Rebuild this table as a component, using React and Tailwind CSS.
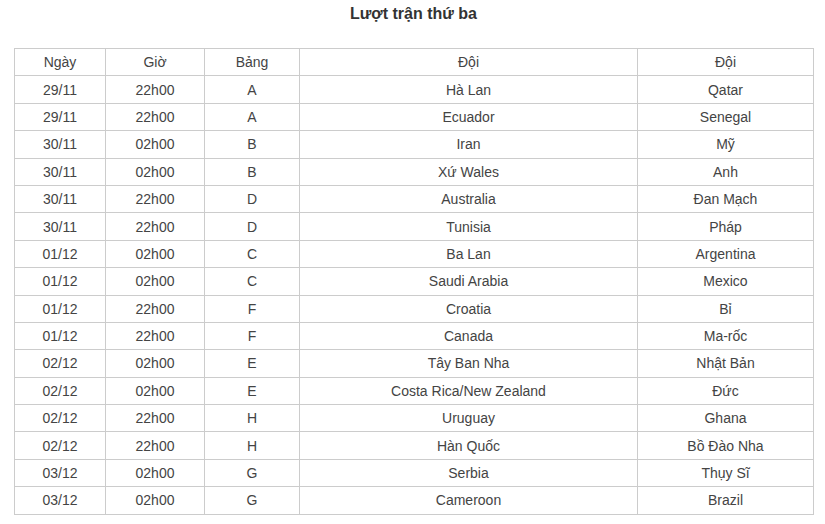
import React from 'react';

const rows = [
    ['29/11', '22h00', 'A', 'Hà Lan', 'Qatar'],
    ['29/11', '22h00', 'A', 'Ecuador', 'Senegal'],
    ['30/11', '02h00', 'B', 'Iran', 'Mỹ'],
    ['30/11', '02h00', 'B', 'Xứ Wales', 'Anh'],
    ['30/11', '22h00', 'D', 'Australia', 'Đan Mạch'],
    ['30/11', '22h00', 'D', 'Tunisia', 'Pháp'],
    ['01/12', '02h00', 'C', 'Ba Lan', 'Argentina'],
    ['01/12', '02h00', 'C', 'Saudi Arabia', 'Mexico'],
    ['01/12', '22h00', 'F', 'Croatia', 'Bỉ'],
    ['01/12', '22h00', 'F', 'Canada', 'Ma-rốc'],
    ['02/12', '02h00', 'E', 'Tây Ban Nha', 'Nhật Bản'],
    ['02/12', '02h00', 'E', 'Costa Rica/New Zealand', 'Đức'],
    ['02/12', '22h00', 'H', 'Uruguay', 'Ghana'],
    ['02/12', '22h00', 'H', 'Hàn Quốc', 'Bồ Đào Nha'],
    ['03/12', '02h00', 'G', 'Serbia', 'Thụy Sĩ'],
    ['03/12', '02h00', 'G', 'Cameroon', 'Brazil'],
];

const headers = ['Ngày', 'Giờ', 'Bảng', 'Đội', 'Đội'];

export default function App() {
    return (
        <div className="bg-white w-[825px] h-[524px] overflow-hidden text-[#333] font-['Liberation_Sans',Arial,sans-serif]">
            <div className="pl-[14px] w-[813px]">
                <h2 className="text-center font-bold text-[16px] leading-[20px] pt-[4px] h-[48px]">Lượt trận thứ ba</h2>
                <table className="w-[799px] table-fixed border-collapse text-[14px] text-center text-[#444]">
                    <colgroup>
                        <col className="w-[91px]" />
                        <col className="w-[99px]" />
                        <col className="w-[95px]" />
                        <col className="w-[338px]" />
                        <col className="w-[176px]" />
                    </colgroup>
                    <thead>
                        <tr className="h-[27.4px]">
                            {headers.map((h, i) => (
                                <th key={i} className="font-normal border border-[#cccccc] p-0 pt-[1px]">{h}</th>
                            ))}
                        </tr>
                    </thead>
                    <tbody>
                        {rows.map((r, i) => (
                            <tr key={i} className="h-[27.4px]">
                                {r.map((c, j) => (
                                    <td key={j} className="border border-[#cccccc] p-0 pt-[1px]">{c}</td>
                                ))}
                            </tr>
                        ))}
                    </tbody>
                </table>
            </div>
        </div>
    );
}
